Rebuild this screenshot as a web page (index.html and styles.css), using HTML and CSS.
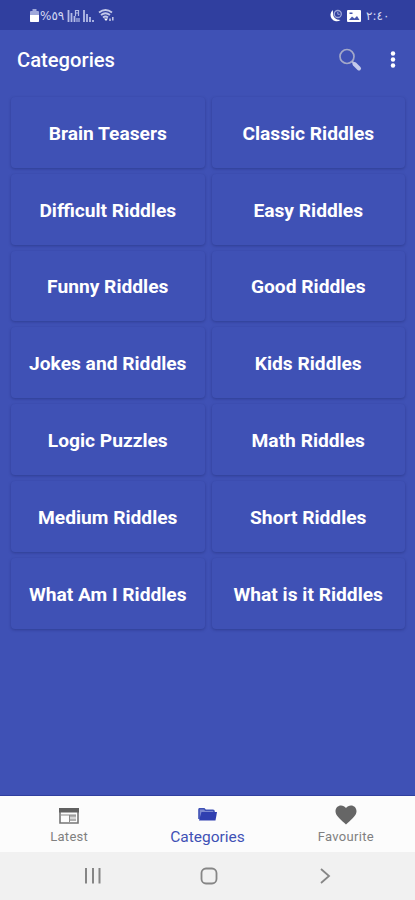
FILE: index.html
```
<!DOCTYPE html>
<html lang="en">
<head>
    <meta charset="UTF-8">
    <meta name="viewport" content="width=device-width, initial-scale=1.0">
    <title>Categories</title>
    <link rel="stylesheet" href="styles.css">
</head>
<body>
    <div class="status-bar">
        <div class="status-left">
            <svg class="battery" width="9" height="13" viewBox="0 0 9 13"><path d="M2.500 0h4v2H8q1 0 1 1v9q0 1-1 1H1q-1 0-1-1V3q0-1 1-1h1.500z" fill="#9fa8da"/><path d="M0 6h9v6q0 1-1 1H1q-1 0-1-1z" fill="#fff"/></svg>
            <span class="percent">%٥٩</span>
            <svg class="signal" width="28" height="14" viewBox="0 0 28 14" stroke="#b3bbe6" stroke-width="1.800" fill="none"><path d="M1.500 1v12M4.500 4v9M7.500 7v6M17 1v12M20 5v8M23 8v5M26 11v2"/><path d="M8.500 7V1.500h3V7M8.500 4h3M10 9v4M12 9v4" stroke-width="1.200"/></svg>
            <svg class="wifi" width="17" height="13" viewBox="0 0 17 13" fill="none" stroke="#c5cae9" stroke-width="1.800"><path d="M1 3.500q6.500-5 13 0M3 6q4.500-3.500 9 0M5 8.500q2.500-2 5 0"/><path d="M6 9.500h4l-2 2.500z" fill="#fff" stroke="none"/><path d="M12 12V9.500M14.800 8v3.500" stroke-width="1.500"/></svg>
        </div>
        <div class="status-right">
            <svg class="moon" width="15" height="14" viewBox="0 0 15 14"><path d="M5 1A6.200 6.200 0 1 0 12.500 11Q4 11 5 1z" fill="#fff"/><circle cx="9.800" cy="5" r="3.500" fill="none" stroke="#9fa8da" stroke-width="1.300"/><path d="M9.800 3v2.300h2" fill="none" stroke="#9fa8da"/></svg>
            <svg class="photo" width="14" height="12" viewBox="0 0 14 12"><path d="M1 0h12q1 0 1 1v10q0 1-1 1H1q-1 0-1-1V1q0-1 1-1z" fill="#fff"/><path d="M2 10l3-3.500L7.500 8.500 10 6l2.500 4zM2.500 2.500h3v1.500h-3z" fill="#4654ac"/></svg>
            <span class="clock">٢:٤٠</span>
        </div>
    </div>

    <header class="app-bar">
        <h1>Categories</h1>
        <svg class="search" width="24" height="24" viewBox="0 0 24 24"><circle cx="9" cy="8.500" r="7" fill="none" stroke="#a3a8c9" stroke-width="1.700"/><path d="M14 13.500l2 2" stroke="#b5bad8" stroke-width="2"/><path d="M16.500 16l4.500 4.500" stroke="#c5cbeb" stroke-width="4" stroke-linecap="round"/></svg>
        <svg class="more" width="6" height="18" viewBox="0 0 6 18" fill="#fff"><circle cx="3" cy="2.500" r="2.200"/><circle cx="3" cy="8.500" r="2.200"/><circle cx="3" cy="14.500" r="2.200"/></svg>
    </header>

    <main class="content">
        <div class="category-grid">
            <div class="card">Brain Teasers</div>
            <div class="card">Classic Riddles</div>
            <div class="card">Difficult Riddles</div>
            <div class="card">Easy Riddles</div>
            <div class="card">Funny Riddles</div>
            <div class="card">Good Riddles</div>
            <div class="card">Jokes and Riddles</div>
            <div class="card">Kids Riddles</div>
            <div class="card">Logic Puzzles</div>
            <div class="card">Math Riddles</div>
            <div class="card">Medium Riddles</div>
            <div class="card">Short Riddles</div>
            <div class="card">What Am I Riddles</div>
            <div class="card">What is it Riddles</div>
        </div>
    </main>

    <nav class="bottom-nav">
        <div class="tab">
            <svg width="20" height="16" viewBox="0 0 20 16"><path d="M1 1h18v14H1z" fill="#fcfcfc" stroke="#757575" stroke-width="1.600"/><path d="M0 0h20v4.500H0z" fill="#616161"/><path d="M11 7h6v2.500h-6zM11 10.500h6V13h-6z" fill="#b0b0b0"/><path d="M10.500 7v7M2 7h15" stroke="#8a8a8a"/></svg>
            <span>Latest</span>
        </div>
        <div class="tab active">
            <svg width="19" height="13" viewBox="0 0 19 13"><path d="M1 11V1.500Q1 .7 2 .7h4l1.500 1.500H15q1 0 1 1V4" fill="#7c88d0" stroke="#3f51b5" stroke-width="1.600"/><path d="M3.500 4H19l-1.500 8.500H1z" fill="#303fb0"/></svg>
            <span>Categories</span>
        </div>
        <div class="tab">
            <svg width="22" height="20" viewBox="0 0 22 20"><path d="M11 19.500L9.400 18C3.700 12.800 0.500 9.900 0.500 6.200 0.500 3 2.900.6 6 .6c2 0 3.800.9 5 2.400C12.200 1.500 14 .6 16 .6c3.100 0 5.500 2.400 5.500 5.600 0 3.700-3.200 6.600-8.900 11.800z" fill="#666"/></svg>
            <span>Favourite</span>
        </div>
    </nav>

    <div class="system-nav">
        <svg width="18" height="18" viewBox="0 0 18 18" stroke="#868686" stroke-width="2"><path d="M2 1v15.500M9 1v15.500M15.500 1v15.500"/></svg>
        <svg width="18" height="18" viewBox="0 0 18 18"><rect x="1.500" y="1.500" width="15" height="15" rx="4.500" fill="none" stroke="#868686" stroke-width="1.800"/></svg>
        <svg width="18" height="18" viewBox="0 0 18 18"><path d="M5 2l8 7-8 7" fill="none" stroke="#868686" stroke-width="1.800"/></svg>
    </div>
</body>
</html>
```
FILE: styles.css
```
* {
    box-sizing: border-box;
}
body {
    margin: 0;
    height: 900px;
    display: flex;
    flex-direction: column;
    font-family: Roboto, sans-serif;
    background-color: #3f51b5;
    color: #fff;
    overflow: hidden;
}
svg {
    display: block;
    flex-shrink: 0;
}
.status-bar {
    height: 30px;
    display: flex;
    justify-content: space-between;
    align-items: center;
    padding: 1px 29px 0 30px;
    background-color: #303f9f;
}
.status-left, .status-right {
    display: flex;
    align-items: center;
}
.percent, .clock {
    direction: ltr;
    unicode-bidi: bidi-override;
    font-family: "DejaVu Sans", sans-serif;
    font-size: 12px;
    line-height: 14px;
    color: #d5d9f2;
}
.percent {
    width: 24px;
    margin: 0 3px 0 1px;
    letter-spacing: -1px;
}
.wifi {
    margin-left: 3px;
}
.photo {
    margin: 0 5px 0 4px;
}
.clock {
    width: 20px;
    letter-spacing: -1px;
}
.app-bar {
    height: 60px;
    display: flex;
    align-items: center;
    padding: 0 19px 0 17px;
}
.app-bar h1 {
    flex: 1;
    margin: 0;
    font-size: 20.200px;
    font-weight: 500;
}
.more {
    margin-left: 28px;
}
.content {
    flex: 1;
    padding: 7px 10px 0 11px;
    border-bottom: 1px solid #303f9f;
}
.category-grid {
    display: grid;
    grid-template-columns: 1fr 1fr;
    grid-auto-rows: 70.800px;
    gap: 6px 7px;
}
.card {
    display: flex;
    align-items: center;
    justify-content: center;
    padding-top: 2px;
    border-radius: 4px;
    background-color: #3f51b5;
    box-shadow: 0 1px 3px rgba(25, 35, 100, 0.4);
    font-size: 19.200px;
    font-weight: 700;
    white-space: nowrap;
}
.bottom-nav {
    height: 56px;
    display: flex;
    background-color: #fcfcfc;
    color: #808080;
    font-size: 13px;
}
.tab {
    flex: 1;
    display: flex;
    flex-direction: column;
    align-items: center;
    justify-content: flex-end;
    gap: 4px;
    padding-bottom: 7px;
    line-height: 16px;
    letter-spacing: 0.3px;
}
.tab:first-child {
    gap: 5px;
}
.active {
    gap: 6px;
    font-size: 15.500px;
    line-height: 20px;
    padding-bottom: 5px;
    letter-spacing: 0;
    color: #3f51b5;
}
.system-nav {
    height: 48px;
    display: flex;
    justify-content: space-between;
    align-items: center;
    padding: 0 81px 0 84px;
    background-color: #f1f1f1;
}
```
